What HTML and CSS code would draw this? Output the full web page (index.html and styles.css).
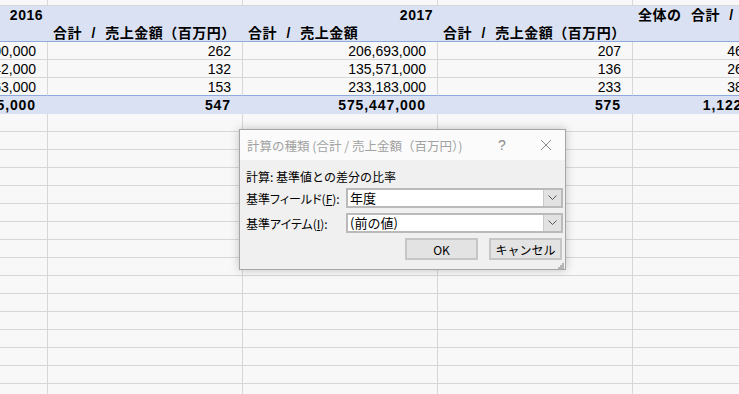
FILE: index.html
```html
<!DOCTYPE html>
<html lang="ja">
<head>
    <meta charset="UTF-8">
    <title>ピボットテーブル - 計算の種類</title>
    <link rel="stylesheet" href="styles.css">
</head>
<body>
    <div class="sheet">
        <div class="row">
            <div class="cell"></div><div class="cell"></div><div class="cell"></div><div class="cell"></div><div class="cell"></div>
        </div>
        <div class="row head">
            <div class="cell">2016</div>
            <div class="cell"></div>
            <div class="cell">2017</div>
            <div class="cell"></div>
            <div class="cell left">全体の 合計 / 売上金額（百万円）</div>
        </div>
        <div class="row head head-end">
            <div class="cell left">合計 / 売上金額</div>
            <div class="cell left">合計 / 売上金額（百万円）</div>
            <div class="cell left">合計 / 売上金額</div>
            <div class="cell left">合計 / 売上金額（百万円）</div>
            <div class="cell"></div>
        </div>
        <div class="row">
            <div class="cell">261,800,000</div>
            <div class="cell">262</div>
            <div class="cell">206,693,000</div>
            <div class="cell">207</div>
            <div class="cell">468,493,000</div>
        </div>
        <div class="row">
            <div class="cell">131,942,000</div>
            <div class="cell">132</div>
            <div class="cell">135,571,000</div>
            <div class="cell">136</div>
            <div class="cell">267,513,000</div>
        </div>
        <div class="row last">
            <div class="cell">153,163,000</div>
            <div class="cell">153</div>
            <div class="cell">233,183,000</div>
            <div class="cell">233</div>
            <div class="cell">386,346,000</div>
        </div>
        <div class="row total">
            <div class="cell">546,905,000</div>
            <div class="cell">547</div>
            <div class="cell">575,447,000</div>
            <div class="cell">575</div>
            <div class="cell">1,122,352,000</div>
        </div>
        <div class="row"><div class="cell"></div><div class="cell"></div><div class="cell"></div><div class="cell"></div><div class="cell"></div></div>
        <div class="row"><div class="cell"></div><div class="cell"></div><div class="cell"></div><div class="cell"></div><div class="cell"></div></div>
        <div class="row"><div class="cell"></div><div class="cell"></div><div class="cell"></div><div class="cell"></div><div class="cell"></div></div>
        <div class="row"><div class="cell"></div><div class="cell"></div><div class="cell"></div><div class="cell"></div><div class="cell"></div></div>
        <div class="row"><div class="cell"></div><div class="cell"></div><div class="cell"></div><div class="cell"></div><div class="cell"></div></div>
        <div class="row"><div class="cell"></div><div class="cell"></div><div class="cell"></div><div class="cell"></div><div class="cell"></div></div>
        <div class="row"><div class="cell"></div><div class="cell"></div><div class="cell"></div><div class="cell"></div><div class="cell"></div></div>
        <div class="row"><div class="cell"></div><div class="cell"></div><div class="cell"></div><div class="cell"></div><div class="cell"></div></div>
        <div class="row"><div class="cell"></div><div class="cell"></div><div class="cell"></div><div class="cell"></div><div class="cell"></div></div>
        <div class="row"><div class="cell"></div><div class="cell"></div><div class="cell"></div><div class="cell"></div><div class="cell"></div></div>
        <div class="row"><div class="cell"></div><div class="cell"></div><div class="cell"></div><div class="cell"></div><div class="cell"></div></div>
        <div class="row"><div class="cell"></div><div class="cell"></div><div class="cell"></div><div class="cell"></div><div class="cell"></div></div>
        <div class="row"><div class="cell"></div><div class="cell"></div><div class="cell"></div><div class="cell"></div><div class="cell"></div></div>
        <div class="row"><div class="cell"></div><div class="cell"></div><div class="cell"></div><div class="cell"></div><div class="cell"></div></div>
        <div class="row"><div class="cell"></div><div class="cell"></div><div class="cell"></div><div class="cell"></div><div class="cell"></div></div>
        <div class="row"><div class="cell"></div><div class="cell"></div><div class="cell"></div><div class="cell"></div><div class="cell"></div></div>
    </div>

    <div class="dialog">
        <div class="dialog-title">
            <span class="title-text">計算の種類 (合計 / 売上金額（百万円）)</span>
            <span class="title-btn help">?</span>
            <span class="title-btn close">
                <svg width="12" height="12" viewBox="0 0 12 12"><path d="M1 1 L11 11 M11 1 L1 11" stroke="#8a8a8a" stroke-width="1" fill="none"/></svg>
            </span>
        </div>
        <div class="dialog-body">
            <p class="calc">計算: 基準値との差分の比率</p>
            <div class="field">
                <label>基準フィールド(<u>F</u>):</label>
                <div class="combo">
                    <span class="combo-value">年度</span>
                    <span class="combo-arrow">
                        <svg width="9" height="6" viewBox="0 0 9 6"><path d="M0.5 0.5 L4.5 4.5 L8.5 0.5" stroke="#555" stroke-width="1" fill="none"/></svg>
                    </span>
                </div>
            </div>
            <div class="field">
                <label>基準アイテム(<u>I</u>):</label>
                <div class="combo">
                    <span class="combo-value">(前の値)</span>
                    <span class="combo-arrow">
                        <svg width="9" height="6" viewBox="0 0 9 6"><path d="M0.5 0.5 L4.5 4.5 L8.5 0.5" stroke="#555" stroke-width="1" fill="none"/></svg>
                    </span>
                </div>
            </div>
            <div class="buttons">
                <button class="button">OK</button>
                <button class="button">キャンセル</button>
            </div>
            <svg class="grip" width="7" height="7" viewBox="0 0 7 7">
                <rect x="5" y="1" width="2" height="2" fill="#b5b5b5"/>
                <rect x="3" y="3" width="2" height="2" fill="#b5b5b5"/>
                <rect x="5" y="3" width="2" height="2" fill="#b5b5b5"/>
                <rect x="1" y="5" width="2" height="2" fill="#b5b5b5"/>
                <rect x="3" y="5" width="2" height="2" fill="#b5b5b5"/>
                <rect x="5" y="5" width="2" height="2" fill="#b5b5b5"/>
            </svg>
        </div>
    </div>
</body>
</html>
```
FILE: styles.css
```css
body {
    margin: 0;
    background-color: #f8f8f8;
    font-family: "Liberation Sans", "Noto Sans CJK JP", sans-serif;
    overflow: hidden;
    height: 394px;
}
.sheet {
    margin: -12px 0 0 -147px;
    width: 963px;
}
.row {
    display: grid;
    grid-template-columns: 195px 195px 195px 195px 183px;
    height: 18px;
    background-color: #f8f8f8;
}
.cell {
    box-sizing: border-box;
    height: 18px;
    border-right: 1px solid #d7d7d7;
    border-bottom: 1px solid #d7d7d7;
    padding: 1px 11px 0 0;
    font-size: 14px;
    line-height: 17px;
    text-align: right;
    white-space: nowrap;
    color: #000;
}
.head {
    background-color: #d9e1f2;
}
.head .cell {
    border: none;
    padding: 1px 5px 0 5px;
    font-weight: bold;
    letter-spacing: 0.5px;
    word-spacing: 5px;
}
.head .left {
    text-align: left;
}
.head-end .cell {
    border-bottom: 1px solid #8ea9db;
}
.last .cell {
    border-bottom: 1px solid #8ea9db;
}
.total {
    background-color: #d9e1f2;
}
.total .cell {
    border: none;
    font-weight: bold;
    letter-spacing: 0.9px;
    padding-right: 12px;
}
.row:not(.head):not(.total) .cell:last-child {
    border-right: none;
}

/* dialog */
.dialog {
    position: absolute;
    left: 239px;
    top: 129px;
    width: 327px;
    height: 141px;
    box-sizing: border-box;
    border: 1px solid #a6a6a6;
    background-color: #f0f0f0;
    box-shadow: 0 0 9px rgba(0, 0, 0, 0.22);
    font-family: "Noto Sans CJK JP", sans-serif;
    font-size: 12px;
    color: #000;
}
.dialog-title {
    display: flex;
    align-items: center;
    height: 30px;
    background-color: #fbfbfb;
    padding-left: 7px;
}
.title-text {
    flex: 1;
    color: #a2a2a2;
    font-size: 12.5px;
    white-space: nowrap;
}
.title-btn {
    text-align: center;
    color: #8a8a8a;
    font-family: "Liberation Sans", sans-serif;
    font-size: 14px;
}
.title-btn.help {
    width: 50px;
}
.title-btn.close {
    width: 38px;
    display: flex;
    justify-content: center;
}
.dialog-body {
    position: relative;
    padding: 9px 2px 0 6px;
}
.calc {
    margin: 0;
    line-height: 16px;
}
.field {
    display: flex;
    align-items: center;
    height: 20px;
    margin-top: 3px;
}
.field + .field {
    margin-top: 5px;
}
.field label {
    width: 100px;
    white-space: nowrap;
    font-feature-settings: "palt";
}
.combo {
    display: flex;
    width: 217px;
    height: 20px;
    box-sizing: border-box;
    border: 2px solid #bababa;
    background-color: #fff;
}
.combo-value {
    flex: 1;
    padding-left: 2px;
    font-size: 13px;
    line-height: 16px;
}
.combo-arrow {
    width: 17px;
    background-color: #e2e2e2;
    border-left: 1px solid #c9c9c9;
    display: flex;
    align-items: center;
    justify-content: center;
}
.buttons {
    display: flex;
    justify-content: flex-end;
    gap: 11px;
    margin-top: 5px;
    padding-right: 1px;
}
.button {
    width: 73px;
    height: 22px;
    box-sizing: border-box;
    border: 2px solid #c6c6c6;
    background-color: #e3e3e3;
    font-family: "Noto Sans CJK JP", sans-serif;
    font-size: 12px;
    color: #000;
    padding: 0;
}
.grip {
    position: absolute;
    right: 1px;
    bottom: -9px;
}
```
